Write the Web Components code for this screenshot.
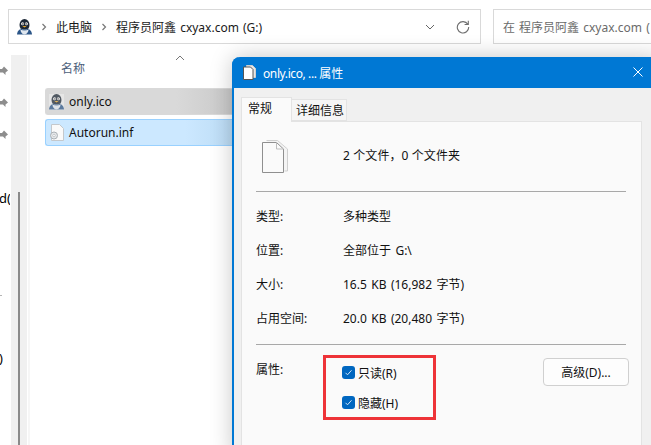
<!DOCTYPE html>
<html lang="zh-CN">
<head>
<meta charset="utf-8">
<title>only.ico 属性</title>
<style>
    html, body {
        margin: 0;
        height: 100%;
        overflow: hidden;
        background: #fff;
        color: #000;
        font-family: "Noto Sans", "Noto Sans CJK SC", sans-serif;
    }
    body {
        position: relative;
        width: 651px;
        height: 445px;
    }
</style>
</head>
<body>
<template id="qq-icon">
    <svg width="15" height="16" viewBox="0 0 15 16">
        <path d="M0 15.500c.2-2.600 1.200-4.300 3-5.300h9c1.800 1 2.800 2.700 3 5.300z" fill="#2c5688"/>
        <ellipse cx="7.500" cy="6" rx="5" ry="6" fill="#1c2735"/>
        <path d="M3.500 9.500c2.500 1.200 5.500 1.200 8 0 .4 2.800-1.500 6-4 6s-4.400-3.200-4-6z" fill="#dfe6ee"/>
        <circle cx="5.600" cy="4.800" r="1.500" fill="#fff"/>
        <circle cx="9.400" cy="4.800" r="1.500" fill="#fff"/>
        <circle cx="5.900" cy="4.900" r=".7" fill="#000"/>
        <circle cx="9.100" cy="4.900" r=".7" fill="#000"/>
        <path d="M5.300 7h4.400l-2.200 1.400z" fill="#e8a92c"/>
        <path d="M3.600 10.200c2.500 1 5.300 1 7.800 0" fill="none" stroke="#2c5688" stroke-width="1"/>
    </svg>
</template>

<file-explorer></file-explorer>
<props-dialog></props-dialog>

<script>
class AddressBar extends HTMLElement {
    constructor() {
        super();
        this.root = this.attachShadow({ mode: 'open' });
    }

    connectedCallback() {
        this.root.innerHTML = `
            <style>
                :host {
                    display: flex;
                    gap: 12px;
                    height: 35px;
                    padding: 9px 0 0 8px;
                    font-size: 12px;
                    word-spacing: 1px;
                    color: #1a1a1a;
                }
                .box {
                    display: flex;
                    align-items: center;
                    box-sizing: border-box;
                    height: 35px;
                    border: 1px solid #d9d9d9;
                    background: #fff;
                    white-space: nowrap;
                    overflow: hidden;
                }
                .path { width: 473px; flex: none; padding-left: 8px; }
                .search { flex: 1; padding-left: 9px; color: #6b6b6b; border-right: 0; }
                .sep { margin: 0 9px 0 9px; }
                .right { margin-left: auto; display: flex; align-items: center; gap: 21px; padding-right: 10px; }
                svg { display: block; flex: none; }
            </style>
            <div class="box path">
                <span id="icon"></span>
                <svg class="sep" width="6" height="8" viewBox="0 0 6 8"><path d="M1.500 1l3 3-3 3" fill="none" stroke="#777" stroke-width="1.200"/></svg>
                <span>此电脑</span>
                <svg class="sep" width="6" height="8" viewBox="0 0 6 8"><path d="M1.500 1l3 3-3 3" fill="none" stroke="#777" stroke-width="1.200"/></svg>
                <span>程序员阿鑫 cxyax.com (G:)</span>
                <div class="right">
                    <svg width="10" height="6" viewBox="0 0 10 6"><path d="M1 1l4 4 4-4" fill="none" stroke="#666" stroke-width="1"/></svg>
                    <svg width="14" height="14" viewBox="0 0 14 14"><path d="M11.800 4.200A5.700 5.700 0 1 0 12.700 7M12.300 .8v3.700H8.600" fill="none" stroke="#6e6e6e" stroke-width="1.100"/></svg>
                </div>
            </div>
            <div class="box search">在 程序员阿鑫 cxyax.com (</div>
        `;
        this.root.getElementById('icon').appendChild(document.getElementById('qq-icon').content.cloneNode(true));
    }
}

class FileRow extends HTMLElement {
    static get observedAttributes() {
        return ['name'];
    }

    constructor() {
        super();
        this.root = this.attachShadow({ mode: 'open' });
    }

    connectedCallback() {
        this.render();
    }

    attributeChangedCallback() {
        this.render();
    }

    render() {
        this.root.innerHTML = `
            <style>
                :host {
                    display: flex;
                    align-items: center;
                    gap: 5px;
                    box-sizing: border-box;
                    height: 27px;
                    padding-left: 3px;
                    border-radius: 3px 0 0 3px;
                    font-size: 12px;
                    color: #111;
                    background: var(--row-bg);
                    border: 1px solid var(--row-border);
                    border-right: 0;
                }
            </style>
            <slot name="icon"></slot>
            <span>${this.getAttribute('name') || ''}</span>
        `;
    }
}

class FileExplorer extends HTMLElement {
    constructor() {
        super();
        this.root = this.attachShadow({ mode: 'open' });
    }

    connectedCallback() {
        this.root.innerHTML = `
            <style>
                :host { display: block; height: 445px; overflow: hidden; }
                .main { display: flex; height: 401px; padding-top: 11px; }
                .nav {
                    width: 11px;
                    flex: none;
                    display: flex;
                    flex-direction: column;
                    align-items: flex-start;
                    font-size: 13px;
                    white-space: nowrap;
                }
                .pin { height: 32px; display: flex; align-items: center; }
                .track {
                    width: 16px;
                    flex: none;
                    background: #f0f0f0;
                    padding-top: 137px;
                    box-sizing: border-box;
                    display: flex;
                    justify-content: center;
                }
                .edge { width: 2px; flex: none; margin-left: 1px; background: #f6f6f6; }
                .thumb { width: 2px; background: #8a8a8a; height: 100%; }
                .list { flex: 1; padding-left: 15px; }
                .head {
                    height: 33px;
                    position: relative;
                    box-sizing: border-box;
                    padding: 4px 0 0 16px;
                    font-size: 12px;
                    color: #4c607a;
                }
                .sort { position: absolute; left: 130px; top: 0; }
                .rows { display: flex; flex-direction: column; gap: 4px; width: 187px; }
                .a { --row-bg: linear-gradient(90deg, #d9d9d9 70%, #c9c9c9); --row-border: #d9d9d9; }
                .b { --row-bg: linear-gradient(90deg, #cce8ff 75%, #bcdcf5); --row-border: #99d1ff; }
                .text { position: absolute; left: -1px; font-size: 13px; overflow: hidden; width: 11px; line-height: 16px; white-space: nowrap; }
                .dash { position: absolute; left: 0; top: 295px; width: 2px; height: 1px; background: #b5b5b5; }
                svg, #qq { display: block; }
                #qq { opacity: .72; background: #ececec; }
            </style>
            <address-bar></address-bar>
            <div class="main">
                <div class="nav">
                    <div class="pin">${FileExplorer.pin}</div>
                    <div class="pin">${FileExplorer.pin}</div>
                    <div class="pin">${FileExplorer.pin}</div>
                    <div class="text" style="top:190px">d(</div>
                    <div class="dash"></div>
                    <div class="text" style="top:350px">)</div>
                </div>
                <div class="track"><div class="thumb"></div></div>
                <div class="edge"></div>
                <div class="list">
                    <div class="head">名称<svg class="sort" width="10" height="6" viewBox="0 0 10 6"><path d="M1 5l4-4 4 4" fill="none" stroke="#777"/></svg></div>
                    <div class="rows">
                        <file-row class="a" name="only.ico"><span slot="icon" id="qq"></span></file-row>
                        <file-row class="b" name="Autorun.inf">
                            <svg slot="icon" width="15" height="17" viewBox="0 0 15 17">
                                <path d="M2.500 .5h8l4 4v12h-12z" fill="#fafafa" stroke="#c4c8cc"/>
                                <circle cx="5" cy="11.500" r="3.500" fill="#e4e6e8" stroke="#aab0b5"/>
                                <circle cx="5" cy="11.500" r="1.200" fill="#fff" stroke="#aab0b5" stroke-width=".6"/>
                            </svg>
                        </file-row>
                    </div>
                </div>
            </div>
        `;
        this.root.getElementById('qq').appendChild(document.getElementById('qq-icon').content.cloneNode(true));
    }

    static get pin() {
        return `<svg width="8" height="10" viewBox="0 0 8 10" style="display:block"><path d="M0 3h2l2-2.500 4 4-2.500 2V9L3 6.500 0 6.500z" fill="#8d8d8d"/></svg>`;
    }
}

class PropRow extends HTMLElement {
    constructor() {
        super();
        this.root = this.attachShadow({ mode: 'open' });
    }

    connectedCallback() {
        this.root.innerHTML = `
            <style>
                :host {
                    display: grid;
                    grid-template-columns: 87px 1fr;
                    height: 34px;
                    align-items: center;
                    font-size: 12px;
                    word-spacing: 1.300px;
                    color: #111;
                }
            </style>
            <span>${this.getAttribute('label')}</span>
            <span><slot></slot></span>
        `;
    }
}

class CheckItem extends HTMLElement {
    constructor() {
        super();
        this.root = this.attachShadow({ mode: 'open' });
    }

    connectedCallback() {
        this.root.innerHTML = `
            <style>
                :host {
                    display: flex;
                    align-items: center;
                    gap: 3px;
                    height: 13px;
                    font-size: 12px;
                    color: #111;
                    white-space: nowrap;
                }
                .box {
                    width: 13px;
                    height: 13px;
                    border-radius: 3px;
                    background: #0067c0;
                    display: flex;
                    align-items: center;
                    justify-content: center;
                }
            </style>
            <span class="box">
                <svg width="9" height="9" viewBox="0 0 9 9"><path d="M1.500 4.800l2 2 4-4.500" fill="none" stroke="#cfe4f7" stroke-width="1"/></svg>
            </span>
            <slot></slot>
        `;
    }
}

class PropsDialog extends HTMLElement {
    constructor() {
        super();
        this.root = this.attachShadow({ mode: 'open' });
    }

    connectedCallback() {
        this.root.innerHTML = `
            <style>
                :host {
                    /* a window lying over the explorer */
                    position: absolute;
                    left: 232px;
                    top: 57px;
                    width: 430px;
                    height: 400px;
                    box-sizing: border-box;
                    border-left: 2px solid #0078d4;
                    border-radius: 8px 8px 0 0;
                    background: #f0f0f0;
                    box-shadow: 0 0 22px rgba(0, 0, 0, .22);
                    display: block;
                }
                .title {
                    height: 31px;
                    margin-left: -2px;
                    background: #0078d4;
                    border-radius: 8px 8px 0 0;
                    color: #fff;
                    display: flex;
                    align-items: center;
                    padding-left: 11px;
                    width: 430px;
                    box-sizing: border-box;
                    font-size: 12px;
                    gap: 7px;
                }
                .latin { letter-spacing: -.4px; }
                .close { position: absolute; left: 399px; top: 10px; display: block; }
                .tabs {
                    display: flex;
                    align-items: flex-end;
                    height: 33px;
                    padding-left: 7px;
                    box-sizing: border-box;
                    font-size: 12px;
                    color: #111;
                }
                .tab {
                    height: 22px;
                    width: 55px;
                    box-sizing: border-box;
                    background: #f5f5f5;
                    border: 1px solid #e3e3e3;
                    border-left: 0;
                    padding: 0 0 1px 4px;
                    display: flex;
                    align-items: center;
                    white-space: nowrap;
                }
                .tab.on {
                    height: 25px;
                    width: 51px;
                    background: #fafafa;
                    border-left: 1px solid #e3e3e3;
                    border-bottom: 0;
                    padding: 0 0 4px 6px;
                    position: relative;
                    top: 1px;
                }
                .panel {
                    margin-left: 7px;
                    width: 401px;
                    height: 340px;
                    box-sizing: border-box;
                    background: #fafafa;
                    border: 1px solid #e3e3e3;
                    padding: 0 14px;
                }
                .summary {
                    display: grid;
                    grid-template-columns: 87px 1fr;
                    align-items: start;
                    height: 69px;
                    font-size: 12px;
                    color: #111;
                }
                .summary svg { margin: 18px 0 0 6px; }
                .summary span { margin-top: 24px; letter-spacing: .1px; }
                hr {
                    border: 0;
                    height: 1px;
                    background: #a8a8a8;
                    margin: 0;
                    width: 370px;
                }
                .props { padding-top: 7px; height: 152px; box-sizing: border-box; }
                .attrs {
                    display: flex;
                    align-items: flex-start;
                    padding-top: 10px;
                    font-size: 12px;
                    color: #111;
                    width: 373px;
                }
                .lab { width: 67px; flex: none; line-height: 20px; margin-top: 5px; }
                .mark {
                    box-sizing: border-box;
                    width: 113px;
                    height: 65px;
                    border: 3px solid #ee3338;
                    padding: 8px 0 0 16px;
                    display: flex;
                    flex-direction: column;
                    gap: 17px;
                }
                button {
                    margin-left: auto;
                    margin-top: 3px;
                    width: 86px;
                    height: 28px;
                    font: inherit;
                    color: #111;
                    background: #fdfdfd;
                    border: 1px solid #d0d0d0;
                    border-radius: 4px;
                    padding: 0;
                }
                svg { display: block; }
            </style>
            <div class="title">
                <svg width="13" height="15" viewBox="0 0 13 15">
                    <path d="M3.500 .5h6l3 3v9h-9z" fill="#e6e6e6" stroke="#d0d0d0"/>
                    <path d="M.5 2h7l2.500 2.500v10H.5z" fill="#fff" stroke="#555"/>
                </svg>
                <span><span class="latin">only.ico, ... </span>属性</span>
                <svg class="close" width="10" height="10" viewBox="0 0 10 10"><path d="M.5 .5l9 9M9.500 .5l-9 9" stroke="#fff" stroke-width="1"/></svg>
            </div>
            <div class="tabs">
                <div class="tab on">常规</div>
                <div class="tab">详细信息</div>
            </div>
            <div class="panel">
                <div class="summary">
                    <svg width="26" height="33" viewBox="0 0 26 33">
                        <path d="M4.500 .5h11l10 8.500v22h-3" fill="#f4f4f4" stroke="#cfcfcf"/>
                        <path d="M.5 2.500h14l7 6.500v23.500H.5z" fill="#fafafa" stroke="#8f8f8f"/>
                        <path d="M14.500 2.500v6.500h7" fill="none" stroke="#bdbdbd"/>
                    </svg>
                    <span>2 个文件，0 个文件夹</span>
                </div>
                <hr>
                <div class="props">
                    <prop-row label="类型:">多种类型</prop-row>
                    <prop-row label="位置:">全部位于 G:\\</prop-row>
                    <prop-row label="大小:">16.5 KB (16,982 字节)</prop-row>
                    <prop-row label="占用空间:">20.0 KB (20,480 字节)</prop-row>
                </div>
                <hr>
                <div class="attrs">
                    <span class="lab">属性:</span>
                    <div class="mark">
                        <check-item>只读(R)</check-item>
                        <check-item>隐藏(H)</check-item>
                    </div>
                    <button>高级(D)...</button>
                </div>
            </div>
        `;
    }
}

customElements.define('address-bar', AddressBar);
customElements.define('file-row', FileRow);
customElements.define('file-explorer', FileExplorer);
customElements.define('prop-row', PropRow);
customElements.define('check-item', CheckItem);
customElements.define('props-dialog', PropsDialog);
</script>
</body>
</html>
